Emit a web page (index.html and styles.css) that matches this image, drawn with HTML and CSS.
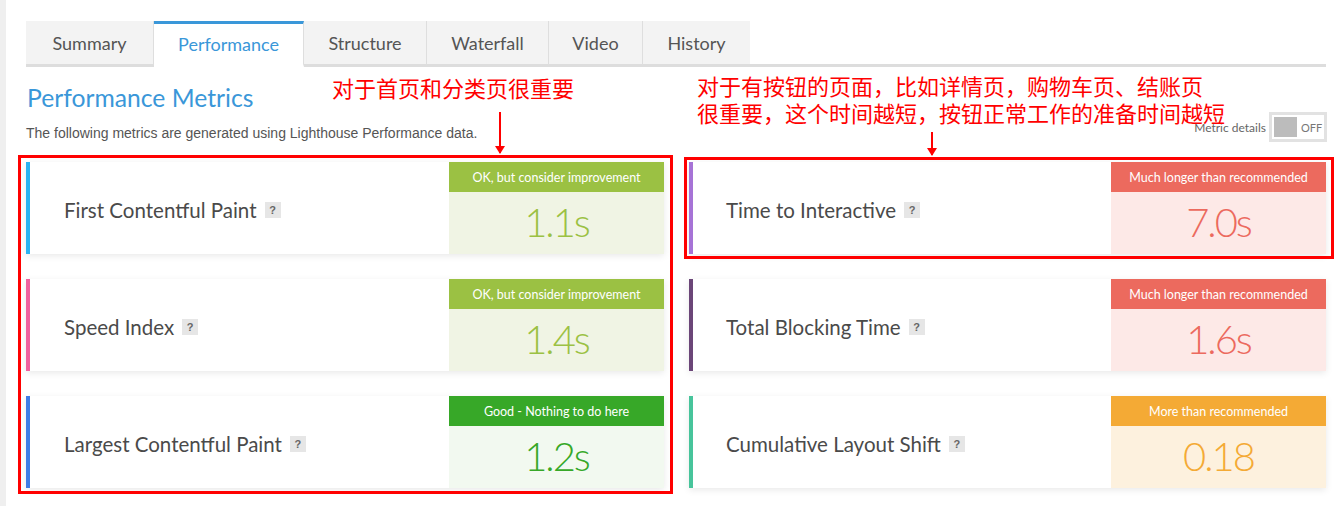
FILE: index.html
```html
<!DOCTYPE html>
<html>
<head>
<meta charset="utf-8">
<link rel="stylesheet" href="styles.css">
</head>
<body>
<div class="page">
  <nav class="tabs">
    <div class="tab t-summary">Summary</div>
    <div class="tab t-perf active">Performance</div>
    <div class="tab t-struct">Structure</div>
    <div class="tab t-water">Waterfall</div>
    <div class="tab t-video">Video</div>
    <div class="tab t-hist">History</div>
  </nav>

  <div class="head">
    <div class="head-text">
      <h1 class="title">Performance Metrics</h1>
      <p class="sub">The following metrics are generated using Lighthouse Performance data.</p>
    </div>
    <div class="toggle">
      <span class="toggle-label">Metric details</span>
      <span class="switch"><span class="knob"></span><span class="off">OFF</span></span>
    </div>
  </div>

  <div class="grid">
    <div class="card c-fcp">
      <div class="label">First Contentful Paint <span class="q">?</span></div>
      <div class="score ok"><div class="badge">OK, but consider improvement</div><div class="val">1.1s</div></div>
    </div>
    <div class="card c-tti">
      <div class="label">Time to Interactive <span class="q">?</span></div>
      <div class="score bad"><div class="badge">Much longer than recommended</div><div class="val">7.0s</div></div>
    </div>
    <div class="card c-si">
      <div class="label">Speed Index <span class="q">?</span></div>
      <div class="score ok"><div class="badge">OK, but consider improvement</div><div class="val">1.4s</div></div>
    </div>
    <div class="card c-tbt">
      <div class="label">Total Blocking Time <span class="q">?</span></div>
      <div class="score bad"><div class="badge">Much longer than recommended</div><div class="val">1.6s</div></div>
    </div>
    <div class="card c-lcp">
      <div class="label">Largest Contentful Paint <span class="q">?</span></div>
      <div class="score good"><div class="badge">Good - Nothing to do here</div><div class="val">1.2s</div></div>
    </div>
    <div class="card c-cls">
      <div class="label">Cumulative Layout Shift <span class="q">?</span></div>
      <div class="score warn"><div class="badge">More than recommended</div><div class="val">0.18</div></div>
    </div>
  </div>

  <div class="note note-left">对于首页和分类页很重要</div>
  <div class="note note-right">对于有按钮的页面，比如详情页，购物车页、结账页<br>很重要，这个时间越短，按钮正常工作的准备时间越短</div>
  <div class="arrow arrow-left"></div>
  <div class="arrow arrow-right"></div>
  <div class="redbox box-left"></div>
  <div class="redbox box-right"></div>
</div>
</body>
</html>
```
FILE: styles.css
```css
* { box-sizing: border-box; }
html, body { margin: 0; padding: 0; }
body {
  background: #fff;
  border-left: 6px solid #efefef;
  min-height: 506px;
  font-family: Lato, "Noto Sans", sans-serif;
  color: #444;
}
.page {
  position: relative;
  padding: 21px 0 0 20px;
  width: 1326px;
}
.tabs {
  display: flex;
  height: 46px;
  border-bottom: 3px solid #dddddd;
  width: 1300px;
}
.tab {
  height: 46px;
  margin-bottom: -3px;
  background: #f3f3f3;
  border-right: 1px solid #dedede;
  border-bottom: 3px solid #dddddd;
  display: flex;
  align-items: center;
  justify-content: center;
  font-size: 18px;
  color: #555;
  padding-top: 1px;
}
.tab.active {
  background: #fff;
  border-top: 3px solid #3a97d9;
  border-bottom-color: #fff;
  color: #3a97d9;
  padding-top: 0;
}
.t-summary { width: 128px; }
.t-perf { width: 150px; }
.t-struct { width: 123px; }
.t-water { width: 122px; }
.t-video { width: 94px; }
.t-hist { width: 107px; border-right: none; }

.head {
  display: flex;
  justify-content: space-between;
  align-items: flex-end;
  width: 1301px;
  margin-top: 16px;
}
.title {
  margin: 0 0 0 1px;
  font-weight: 400;
  font-size: 24.7px;
  line-height: 30px;
  color: #3a97d9;
}
.sub {
  margin: 12px 0 0 0;
  font-family: "Liberation Sans", Arial, sans-serif;
  font-size: 14px;
  line-height: 16px;
  color: #555;
}
.toggle {
  display: flex;
  align-items: center;
  gap: 3px;
  margin-bottom: -1px;
}
.toggle-label {
  font-size: 12px;
  color: #666;
}
.switch {
  display: flex;
  align-items: center;
  width: 58px;
  height: 30px;
  border: 3px solid #e2e2e2;
  background: #fff;
  padding-left: 2px;
}
.knob {
  width: 23px;
  height: 20px;
  background: #bcbcbc;
}
.off {
  font-size: 11px;
  color: #777;
  margin-left: 4px;
}

.grid {
  display: grid;
  grid-template-columns: 638px 637px;
  grid-auto-rows: 92px;
  column-gap: 25px;
  row-gap: 25px;
  margin-top: 21px;
}
.card {
  display: flex;
  background: #fff;
  border-left: 4px solid #ccc;
  box-shadow: 0 2px 7px rgba(0,0,0,0.09);
}
.c-fcp { border-left-color: #2ab3f2; }
.c-si { border-left-color: #f0619f; }
.c-lcp { border-left-color: #3f7de6; }
.c-tti { border-left-color: #a673d6; }
.c-tbt { border-left-color: #6b4678; }
.c-cls { border-left-color: #47c49b; }

.label {
  flex: 1;
  display: flex;
  align-items: center;
  padding-left: 34px;
  font-size: 20.5px;
  color: #4a4a4a;
  padding-top: 4px;
}
.c-tti .label, .c-tbt .label, .c-cls .label { padding-left: 33px; }
.q {
  display: inline-flex;
  align-items: center;
  justify-content: center;
  width: 16px;
  height: 16px;
  margin-left: 8px;
  background: #e6e6e6;
  color: #666;
  font-size: 11px;
  font-weight: 700;
  font-family: "Liberation Sans", Arial, sans-serif;
}
.score {
  width: 215px;
  display: flex;
  flex-direction: column;
}
.badge {
  height: 30px;
  display: flex;
  align-items: center;
  justify-content: center;
  color: #fff;
  font-size: 12.5px;
}
.val {
  flex: 1;
  display: flex;
  align-items: center;
  justify-content: center;
  font-size: 40px;
  font-weight: 300;
  letter-spacing: -2px;
  padding-bottom: 2px;
}
.ok .badge { background: #9bc143; }
.ok .val { background: #f0f4e4; color: #9bc143; }
.good .badge { background: #37a828; }
.good .val { background: #f2f9f0; color: #37a828; }
.bad .badge { background: #ec6a5e; }
.bad .val { background: #fde9e7; color: #ec6a5e; }
.warn .badge { background: #f4aa35; }
.warn .val { background: #fdf1de; color: #f4aa35; }

.note {
  position: absolute;
  color: #ff0000;
  font-family: "Noto Sans CJK SC", sans-serif;
  font-size: 22px;
  line-height: 27px;
  white-space: nowrap;
}
.note-left { left: 326px; top: 74px; }
.note-right { left: 691px; top: 72px; }
.arrow {
  position: absolute;
  width: 2px;
  background: #ff0000;
}
.arrow::after {
  content: "";
  position: absolute;
  left: -4px;
  bottom: -1px;
  border-left: 5px solid transparent;
  border-right: 5px solid transparent;
  border-top: 8px solid #ff0000;
}
.arrow-left { left: 493px; top: 112px; height: 41px; }
.arrow-right { left: 925px; top: 132px; height: 23px; }
.redbox {
  position: absolute;
  border: 3px solid #ff0000;
}
.box-left { left: 12px; top: 155px; width: 655px; height: 339px; }
.box-right { left: 678px; top: 157px; width: 650px; height: 102px; }
```
